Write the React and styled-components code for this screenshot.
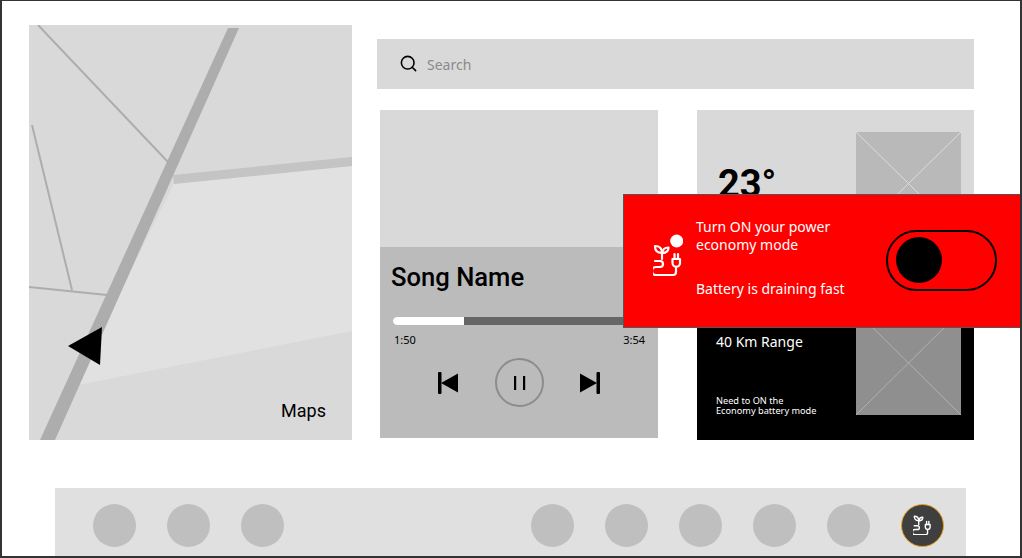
import React from 'react';
import styled, { createGlobalStyle } from 'styled-components';
import { Search } from 'lucide-react';

const GlobalStyle = createGlobalStyle`
    html, body {
        margin: 0;
        padding: 0;
        background: #fff;
    }
    * {
        box-sizing: border-box;
    }
`;

const Frame = styled.div`
    position: relative;
    width: 1022px;
    height: 558px;
    border: 2px solid #333;
    border-top-width: 1px;
    background: #fff;
    font-family: "Noto Sans", sans-serif;
    overflow: hidden;
    display: flex;
    flex-direction: column;
`;

const Top = styled.div`
    display: flex;
    padding: 24px 0 0 27px;
    height: 487px;
`;

const MapCard = styled.div`
    position: relative;
    width: 323px;
    height: 415px;
    background: #d9d9d9;
    flex: none;
`;

const MapLabel = styled.span`
    position: absolute;
    right: 26px;
    bottom: 19px;
    font: 400 18px "Roboto", sans-serif;
    color: #000;
`;

const Right = styled.div`
    margin-left: 25px;
    width: 597px;
    padding-top: 14px;
`;

const SearchBar = styled.div`
    display: flex;
    align-items: center;
    gap: 9px;
    height: 50px;
    padding-left: 22px;
    background: #d9d9d9;
    color: #8a8a8a;
    font-size: 14px;
    svg {
        margin-top: -2px;
    }
`;

const Cards = styled.div`
    display: flex;
    margin: 21px 0 0 3px;
`;

const Player = styled.div`
    width: 278px;
    height: 328px;
    display: flex;
    flex-direction: column;
    background: #d9d9d9;
`;

const PlayerBody = styled.div`
    margin-top: 137px;
    flex: 1;
    background: #bbb;
    padding: 15px 13px 0 13px;
`;

const SongName = styled.div`
    font: 500 25.6px/30px "Roboto", sans-serif;
    color: #000;
    margin-left: -2px;
`;

const Track = styled.div`
    height: 8px;
    margin-top: 25px;
    background: #666;
    border-radius: 4px 0 0 4px;
    overflow: hidden;
`;

const TrackFill = styled.div`
    height: 100%;
    background: #fff;
`;

const Times = styled.div`
    display: flex;
    justify-content: space-between;
    margin-top: 7px;
    padding-left: 1px;
    font-size: 11px;
    line-height: 15px;
    color: #000;
`;

const Controls = styled.div`
    display: flex;
    justify-content: center;
    align-items: center;
    gap: 36px;
    margin-top: 11px;
`;

const PauseButton = styled.div`
    width: 49px;
    height: 49px;
    margin-left: 1px;
    border: 2px solid #8c8c8c;
    border-radius: 50%;
    display: flex;
    justify-content: center;
    align-items: center;
`;

const Weather = styled.div`
    width: 277px;
    height: 330px;
    margin-left: 39px;
    display: flex;
    flex-direction: column;
`;

const Panel = styled.div`
    height: ${p => p.$h}px;
    display: flex;
    justify-content: space-between;
    padding-right: 13px;
    background: ${p => p.$dark ? '#000' : '#d9d9d9'};
    color: ${p => p.$dark ? '#fff' : '#000'};
    align-items: ${p => p.$dark ? 'flex-end' : 'flex-start'};
    padding-top: ${p => p.$dark ? 0 : 22}px;
    padding-bottom: ${p => p.$dark ? 25 : 0}px;
`;

const Temperature = styled.div`
    font: 700 38px/44px "Roboto", sans-serif;
    margin: 30px 0 0 21px;
`;

const RangeText = styled.div`
    align-self: stretch;
    margin-left: 19px;
    display: flex;
    flex-direction: column;
    justify-content: space-between;
    padding-top: 59px;
`;

const Range = styled.div`
    font-size: 14px;
    line-height: 20px;
`;

const RangeNote = styled.div`
    font-size: 9.2px;
    line-height: 10px;
    margin-bottom: -1px;
`;

const Thumb = styled.svg`
    display: block;
    width: 105px;
    height: ${p => p.$h}px;
    flex: none;
    background: ${p => p.$bg};
`;

const Popup = styled.div`
    position: absolute;
    left: 621px;
    top: 193px;
    width: 397px;
    height: 134px;
    background: #f00;
    border: 1px solid #555;
    border-right: none;
    display: flex;
    align-items: center;
    padding: 0 0 2px 29px;
    color: #fff;
`;

const PopupIcon = styled.div`
    margin-top: -9px;
    display: flex;
`;

const PopupText = styled.div`
    margin: -4px 0 0 13px;
    width: 190px;
    font-size: 14px;
    line-height: 18px;
    display: flex;
    flex-direction: column;
    gap: 26px;
`;

const Toggle = styled.div`
    width: 111px;
    height: 61px;
    border: 2px solid #000;
    border-radius: 31px;
    display: flex;
    align-items: center;
    padding-left: 8px;
`;

const Knob = styled.div`
    width: 46px;
    height: 46px;
    border-radius: 50%;
    background: #000;
`;

const Nav = styled.div`
    margin-left: 53px;
    width: 911px;
    flex: 1;
    background: #e0e0e0;
    display: flex;
    align-items: center;
    padding: 6px 22px 0 38px;
    justify-content: space-between;
`;

const NavGroup = styled.div`
    display: flex;
    gap: 31px;
`;

const NavDot = styled.div`
    width: 43px;
    height: 43px;
    border-radius: 50%;
    background: ${p => p.$active ? '#3f3f3f' : '#bfbfbf'};
    border: ${p => p.$active ? '1px solid #f0a21c' : 'none'};
    display: flex;
    justify-content: center;
    align-items: center;
`;

const PlantPlug = ({ width, sun }) => {
    const box = sun ? [13, 8, 30, 44] : [13, 18, 30, 33];
    return (
        <svg width={width} height={(width * box[3]) / box[2]} viewBox={box.join(' ')} fill="none" stroke="#fff" strokeWidth="2.2" strokeLinecap="round" strokeLinejoin="round">
            {sun && <circle cx="36.700" cy="15" r="6.500" fill="#fff" stroke="none" />}
            <path d="M15 20c5 0 7 2 7 7-5 0-7-2-7-7z" />
            <path d="M22.500 27c0-3.500 2-5.500 6-5.500 0 3.500-2 5.500-6 5.500z" />
            <path d="M22 27v6" />
            <path d="M15 35h5a3 3 0 0 1 0 6h-4a4 4 0 0 0 0 8h17a3 3 0 0 0 3-3v-4" />
            <path d="M32.500 33h7.500v4a3.750 3.750 0 0 1-7.500 0z" />
            <path d="M34.500 33v-5M38 33v-5" />
        </svg>
    );
};

const Placeholder = ({ h, bg, line }) => (
    <Thumb $h={h} $bg={bg} viewBox="0 0 105 100" preserveAspectRatio="none">
        <path d="M0 0L105 100M105 0L0 100" stroke={line} strokeWidth="1" vectorEffect="non-scaling-stroke" />
    </Thumb>
);

const SkipBack = () => (
    <svg width="20" height="22" viewBox="0 0 20 22" fill="#000">
        <rect x="0" y="0" width="3.500" height="22" rx="1" />
        <path d="M20 1.500V20.500L3 11z" />
    </svg>
);

const SkipNext = () => (
    <svg width="20" height="22" viewBox="0 0 20 22" fill="#000">
        <rect x="16.500" y="0" width="3.500" height="22" rx="1" />
        <path d="M0 1.500V20.500L17 11z" />
    </svg>
);

const PauseIcon = () => (
    <svg width="12" height="14" viewBox="0 0 12 14" fill="#000">
        <rect x="0" y="0" width="2.200" height="14" />
        <rect x="9" y="0" width="2.200" height="14" />
    </svg>
);

const MapDrawing = () => (
    <svg width="323" height="415" viewBox="0 0 323 415" style={{ display: 'block' }}>
        <path d="M145 158L323 140V306L49 360L85 280z" fill="#e1e1e1" />
        <path d="M144 150L323 132V141L145 159z" fill="#c4c4c4" />
        <path d="M9 0L139 137M3 100L43 265M0 262L78 270" stroke="#adadad" strokeWidth="2" fill="none" />
        <path d="M199 3H210L26 415H11z" fill="#adadad" />
        <path d="M39 321L73 302L71 340z" fill="#000" />
    </svg>
);

export default function App() {
    return (
        <Frame>
            <GlobalStyle />
            <Top>
                <MapCard>
                    <MapDrawing />
                    <MapLabel>Maps</MapLabel>
                </MapCard>
                <Right>
                    <SearchBar>
                        <Search size={19} color="#000" strokeWidth={2} />
                        Search
                    </SearchBar>
                    <Cards>
                        <Player>
                            <PlayerBody>
                                <SongName>Song Name</SongName>
                                <Track>
                                    <TrackFill style={{ width: `${(71 / 252) * 100}%` }} />
                                </Track>
                                <Times>
                                    <span>1:50</span>
                                    <span>3:54</span>
                                </Times>
                                <Controls>
                                    <SkipBack />
                                    <PauseButton>
                                        <PauseIcon />
                                    </PauseButton>
                                    <SkipNext />
                                </Controls>
                            </PlayerBody>
                        </Player>
                        <Weather>
                            <Panel $h={163}>
                                <Temperature>23°</Temperature>
                                <Placeholder h={103} bg="#b9b9b9" line="#dcdcdc" />
                            </Panel>
                            <Panel $h={167} $dark>
                                <RangeText>
                                    <Range>40 Km Range</Range>
                                    <RangeNote>
                                        Need to ON the
                                        <br />
                                        Economy battery mode
                                    </RangeNote>
                                </RangeText>
                                <Placeholder h={104} bg="#8f8f8f" line="#b0b0b0" />
                            </Panel>
                        </Weather>
                    </Cards>
                </Right>
            </Top>
            <Nav>
                <NavGroup>
                    <NavDot />
                    <NavDot />
                    <NavDot />
                </NavGroup>
                <NavGroup>
                    <NavDot />
                    <NavDot />
                    <NavDot />
                    <NavDot />
                    <NavDot />
                    <NavDot $active>
                        <PlantPlug width={19} />
                    </NavDot>
                </NavGroup>
            </Nav>
            <Popup>
                <PopupIcon>
                    <PlantPlug width={30} sun />
                </PopupIcon>
                <PopupText>
                    <div>
                        Turn ON your power
                        <br />
                        economy mode
                    </div>
                    <div>Battery is draining fast</div>
                </PopupText>
                <Toggle>
                    <Knob />
                </Toggle>
            </Popup>
        </Frame>
    );
}
